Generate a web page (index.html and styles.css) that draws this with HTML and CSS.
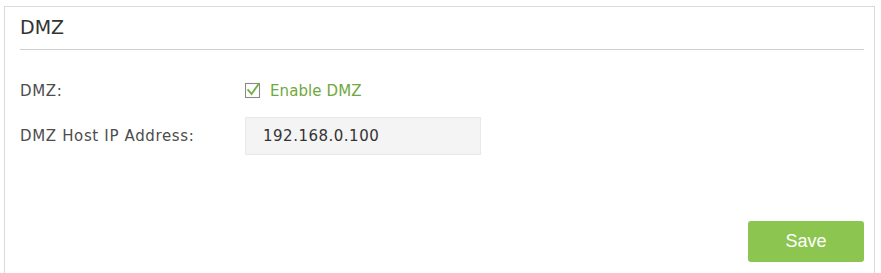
FILE: index.html
```html
<!DOCTYPE html>
<html>
<head>
<meta charset="utf-8">
<link rel="stylesheet" href="styles.css">
</head>
<body>
<div class="panel">
  <h2 class="title">DMZ</h2>
  <div class="divider"></div>
  <div class="form">
    <div class="row row-check">
      <span class="label">DMZ:</span>
      <label class="check">
        <svg class="box" width="18" height="18" viewBox="0 0 18 18">
          <rect x="0.5" y="2.5" width="14" height="14" fill="#fff" stroke="#8a8a8a" stroke-width="1.1"/>
          <path d="M3.2 9 L6.6 13 L13.6 3" fill="none" stroke="#74b043" stroke-width="1.9" stroke-linecap="square"/>
        </svg>
        <span class="check-text">Enable DMZ</span>
      </label>
    </div>
    <div class="row row-input">
      <span class="label">DMZ Host IP Address:</span>
      <div class="input">192.168.0.100</div>
    </div>
  </div>
  <div class="actions">
    <button class="save">Save</button>
  </div>
</div>
</body>
</html>
```
FILE: styles.css
```css
html, body {
  margin: 0;
  padding: 0;
  background: #fff;
}
body {
  font-family: "DejaVu Sans", Verdana, sans-serif;
  overflow: hidden;
  height: 273px;
}
.panel {
  margin: 6px 0 0 4px;
  width: 871px;
  min-height: 300px;
  border: 1px solid #dadada;
  padding: 8px 10px 0 15px;
  box-sizing: border-box;
}
.title {
  margin: 0;
  font-size: 19px;
  line-height: 24px;
  font-weight: normal;
  color: #333;
}
.divider {
  margin-top: 10px;
  height: 1px;
  background: #cfcfcf;
}
.form {
  display: flex;
  flex-direction: column;
  gap: 11px;
  margin-top: 26px;
}
.row {
  display: flex;
  align-items: center;
}
.row-check { height: 30px; }
.row-input { height: 38px; }
.label {
  width: 225px;
  font-size: 15px;
  letter-spacing: 0.65px;
  color: #4d4d4d;
}
.check {
  display: flex;
  align-items: center;
  gap: 7px;
}
.box { display: block; margin-top: -3px; }
.check-text {
  font-size: 15px;
  letter-spacing: 0.1px;
  color: #70a83e;
}
.input {
  width: 236px;
  height: 38px;
  box-sizing: border-box;
  background: #f4f4f4;
  border: 1px solid #e8e8e8;
  padding-left: 17px;
  display: flex;
  align-items: center;
  font-size: 15px;
  letter-spacing: 0.5px;
  color: #333;
}
.actions {
  display: flex;
  justify-content: flex-end;
  margin-top: 66px;
}
.save {
  width: 116px;
  height: 41px;
  background: #8cc650;
  border: none;
  border-radius: 3px;
  color: #fff;
  font-family: "Liberation Sans", Arial, sans-serif;
  font-size: 18px;
  padding: 0;
}
```
